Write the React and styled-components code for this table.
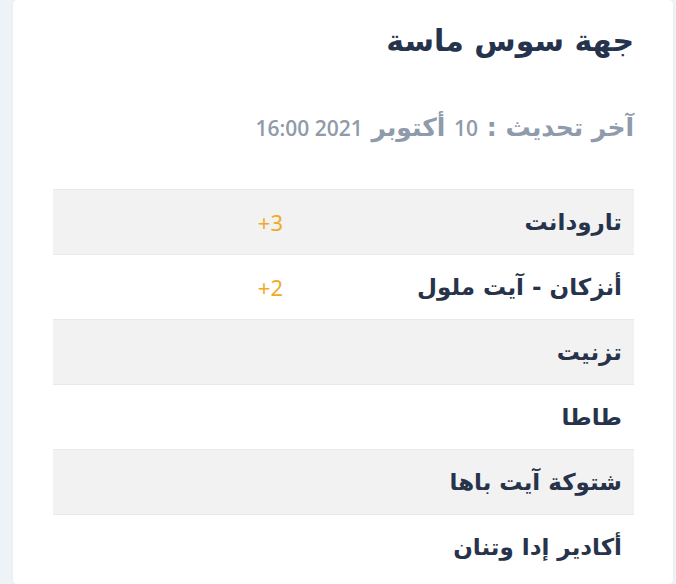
import styled, { createGlobalStyle } from "styled-components";

const GlobalStyle = createGlobalStyle`
  html, body {
    margin: 0;
    padding: 0;
    background: #eef3f8;
  }
  body {
    font-family: "DejaVu Sans", sans-serif;
  }
`;

const regions = [
  { name: "تارودانت", delta: "+3" },
  { name: "أنزكان - آيت ملول", delta: "+2" },
  { name: "تزنيت" },
  { name: "طاطا" },
  { name: "شتوكة آيت باها" },
  { name: "أكادير إدا وتنان" },
];

const App = () => (
  <Page>
    <GlobalStyle />
    <Card dir="rtl">
      <Title>جهة سوس ماسة</Title>
      <Updated>
        آخر تحديث : <Num>10</Num> أكتوبر <Num>2021 16:00</Num>
      </Updated>
      <Table>
        {regions.map((r, i) => (
          <Row key={r.name} $striped={i % 2 === 0}>
            <Name>{r.name}</Name>
            <Delta>{r.delta && <span dir="ltr">{r.delta}</span>}</Delta>
          </Row>
        ))}
      </Table>
    </Card>
  </Page>
);

export default App;

const Page = styled.div`
  min-height: 584px;
  padding-left: 13px;
  padding-right: 3px;
`;

const Card = styled.div`
  background: #fff;
  border-radius: 4px;
  min-height: 584px;
  box-sizing: border-box;
  padding: 22px 39px 0 40px;
  box-shadow: 0 0 2px rgb(30 50 80 / 8%);
`;

const Title = styled.h1`
  margin: 0;
  font-size: 30px;
  font-weight: bold;
  color: #26334d;
  line-height: 38px;
`;

const Updated = styled.div`
  margin-top: 53px;
  font-size: 25px;
  font-weight: bold;
  color: #8f9aab;
  line-height: 30px;
`;

const Num = styled.span`
  font-family: "Open Sans", sans-serif;
  font-size: 21px;
  font-weight: 600;
`;

const Table = styled.div`
  margin-top: 46px;
  display: flex;
  flex-direction: column;
`;

const Row = styled.div`
  display: grid;
  grid-template-columns: 339px 1fr;
  align-items: center;
  height: 64px;
  border-top: 1px solid #e9e9e9;
  background: ${(p) => (p.$striped ? "#f2f2f2" : "#fff")};
`;

const Name = styled.div`
  padding-right: 12px;
  font-size: 23px;
  font-weight: bold;
  color: #27334b;
`;

const Delta = styled.div`
  padding-right: 12px;
  font-family: "Noto Sans", sans-serif;
  font-size: 22px;
  color: #f0ab1f;
`;
